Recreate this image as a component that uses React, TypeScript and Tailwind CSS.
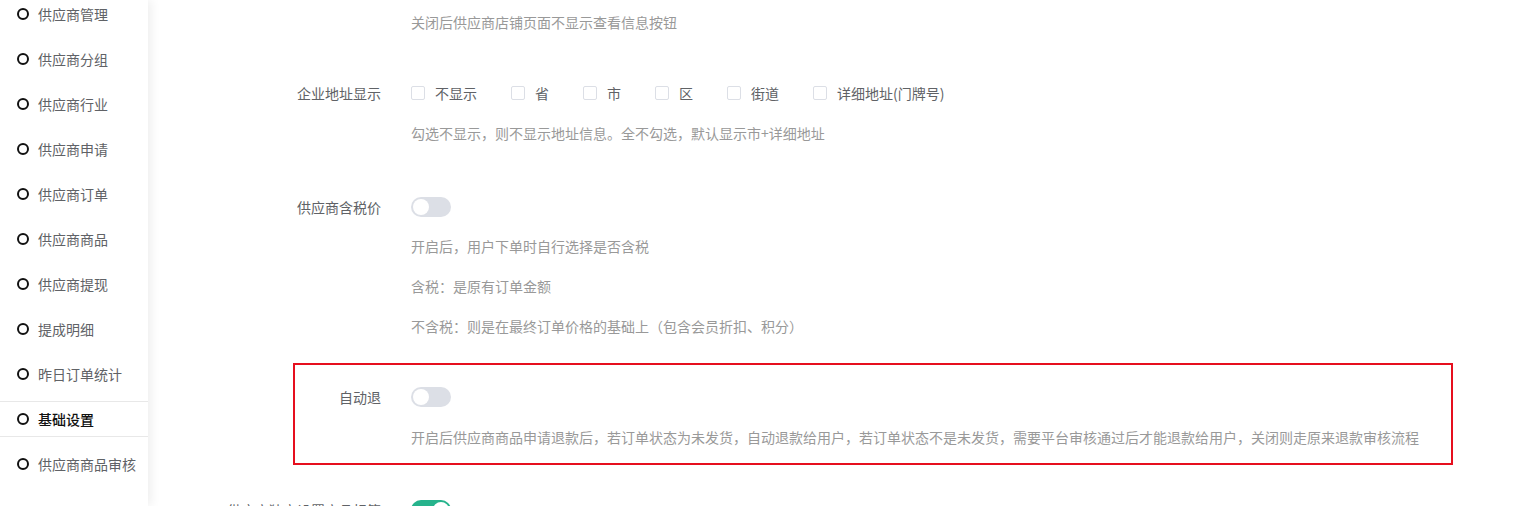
import React from "react";

const FONT = { fontFamily: '"Microsoft YaHei","Noto Sans CJK SC","Noto Sans",sans-serif' };

const navItems = [
  "供应商管理",
  "供应商分组",
  "供应商行业",
  "供应商申请",
  "供应商订单",
  "供应商商品",
  "供应商提现",
  "提成明细",
  "昨日订单统计",
  "基础设置",
  "供应商商品审核",
];

function Toggle({ on = false }: { on?: boolean }) {
  return (
    <div
      className={`relative h-[20px] w-[40px] rounded-full ${on ? "bg-[#26b38c]" : "bg-[#dcdfe6]"}`}
    >
      <div
        className={`absolute top-[2px] h-[16px] w-[16px] rounded-full bg-white ${on ? "left-[22px]" : "left-[2px]"}`}
      />
    </div>
  );
}

function Checkbox({ label }: { label: string }) {
  return (
    <div className="mr-[34px] flex items-center">
      <span className="h-[14px] w-[14px] rounded-[2px] border border-[#dcdfe6] bg-white" />
      <span className="pl-[10px] text-[14px] text-[#606266]">{label}</span>
    </div>
  );
}

function Help({ children }: { children: React.ReactNode }) {
  return <div className="h-[40px] text-[14px] leading-[40px] text-[#999999]">{children}</div>;
}

export default function App() {
  return (
    <div className="flex h-[506px] w-[1529px] overflow-hidden bg-white" style={FONT}>
      {/* Sidebar */}
      <div className="relative z-10 w-[148px] shrink-0 bg-white shadow-[3px_0_10px_rgba(0,0,0,0.07)]">
        <div className="-mt-[4px] flex flex-col gap-[9px]">
          {navItems.map((t) => {
            const active = t === "基础设置";
            return (
              <div
                key={t}
                className={`flex h-[36px] items-center pl-[17px] ${active ? "border-y border-[#e8e8e8]" : ""}`}
              >
                <span className="h-[12px] w-[12px] rounded-full border-[2px] border-[#111]" />
                <span
                  className={`ml-[9px] text-[14px] ${active ? "font-medium text-[#111]" : "text-[#606266]"}`}
                >
                  {t}
                </span>
              </div>
            );
          })}
        </div>
      </div>

      {/* Main */}
      <div className="flex-1 pt-[2px]">
        <div className="grid grid-cols-[263px_1fr]">
          <div />
          <Help>关闭后供应商店铺页面不显示查看信息按钮</Help>
        </div>

        <div className="mt-[31px] grid grid-cols-[263px_1fr]">
          <div className="pr-[30px] text-right text-[14px] leading-[40px] text-[#606266]">企业地址显示</div>
          <div>
            <div className="flex h-[40px] items-center">
              <Checkbox label="不显示" />
              <Checkbox label="省" />
              <Checkbox label="市" />
              <Checkbox label="区" />
              <Checkbox label="街道" />
              <Checkbox label="详细地址(门牌号)" />
            </div>
            <div className="h-[41px] text-[14px] leading-[40px] text-[#999999]">
              勾选不显示，则不显示地址信息。全不勾选，默认显示市+详细地址
            </div>
          </div>
        </div>

        <div className="mt-[33px] grid grid-cols-[263px_1fr]">
          <div className="pr-[30px] text-right text-[14px] leading-[40px] text-[#606266]">供应商含税价</div>
          <div>
            <div className="flex h-[39px] items-center">
              <Toggle />
            </div>
            <Help>开启后，用户下单时自行选择是否含税</Help>
            <Help>含税：是原有订单金额</Help>
            <Help>不含税：则是在最终订单价格的基础上（包含会员折扣、积分）</Help>
          </div>
        </div>

        <div className="ml-[145px] mt-[17px] w-[1160px] border-2 border-[#e60f1e] pb-[6px] pt-[12px]">
          <div className="grid grid-cols-[116px_1fr]">
            <div className="pr-[30px] text-right text-[14px] leading-[40px] text-[#606266]">自动退</div>
            <div>
              <div className="flex h-[40px] items-center">
                <Toggle />
              </div>
              <Help>
                开启后供应商商品申请退款后，若订单状态为未发货，自动退款给用户，若订单状态不是未发货，需要平台审核通过后才能退款给用户，关闭则走原来退款审核流程
              </Help>
            </div>
          </div>
        </div>

        <div className="mt-[25px] grid grid-cols-[263px_1fr]">
          <div className="pr-[30px] text-right text-[14px] leading-[40px] text-[#606266]">供应商独立设置商品标签</div>
          <div className="flex h-[40px] items-center">
            <Toggle on />
          </div>
        </div>
      </div>
    </div>
  );
}
